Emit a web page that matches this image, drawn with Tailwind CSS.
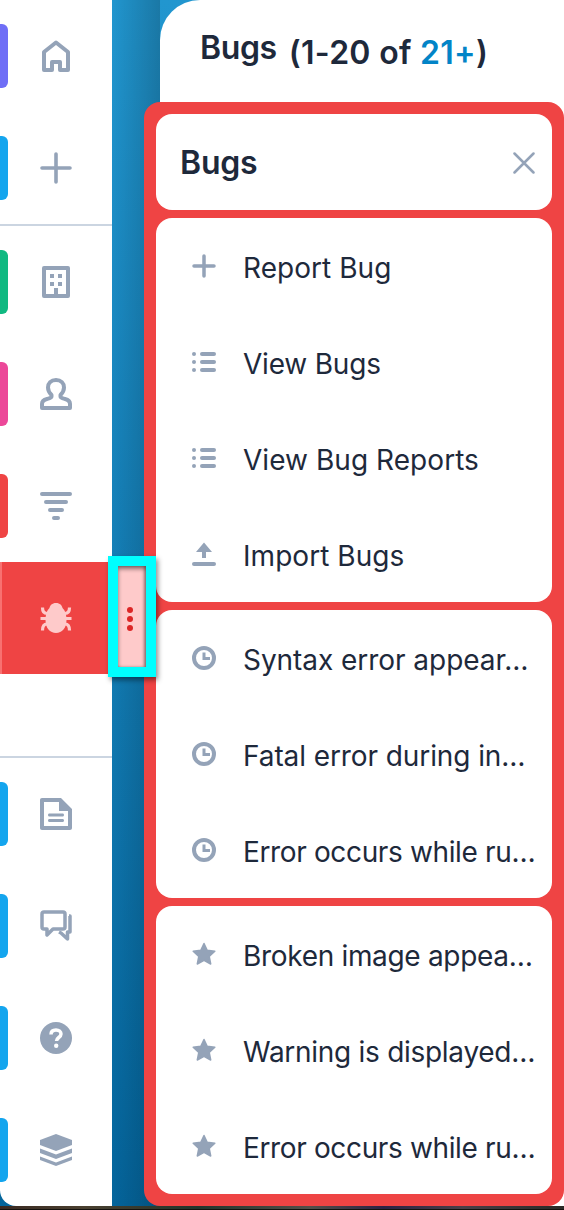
<!DOCTYPE html>
<html lang="en">
  <head>
    <meta charset="UTF-8" />
    <title>Bugs</title>
    <script src="https://cdn.jsdelivr.net/npm/@tailwindcss/browser@4"></script>
  </head>
  <body class="bg-[#15120f] font-['Inter',sans-serif]">
    <div class="relative h-[1210px] w-[564px] overflow-hidden">
      <div class="flex h-[1206px] bg-gradient-to-b from-[#2196cf] to-[#04659c]">
        <!-- Sidebar -->
        <nav class="z-10 flex w-[112px] shrink-0 flex-col rounded-bl-[16px] bg-white">
          <a class="relative flex h-[112px] shrink-0 items-center justify-center">
            <span class="absolute left-0 top-[24px] h-[64px] w-[8px] rounded-r-[6px] bg-[#6f6ef6]"></span>
            <svg class="h-[32px] w-[32px]" viewBox="0 0 32 32" fill="none" stroke="#94a3b8" stroke-width="4" stroke-linejoin="round"><path d="M4 12 16 2.500 28 12V30H20V22H12V30H4Z" /></svg>
          </a>
          <a class="relative flex h-[112px] shrink-0 items-center justify-center">
            <span class="absolute left-0 top-[24px] h-[64px] w-[8px] rounded-r-[6px] bg-[#14a5ee]"></span>
            <svg class="h-[32px] w-[32px]" viewBox="0 0 32 32" fill="none" stroke="#94a3b8" stroke-width="3.600" stroke-linecap="round"><path d="M16 2V30M2 16H30" /></svg>
          </a>
          <div class="h-[2px] shrink-0 bg-[#cbd5e1]"></div>
          <a class="relative flex h-[112px] shrink-0 items-center justify-center">
            <span class="absolute left-0 top-[24px] h-[64px] w-[8px] rounded-r-[6px] bg-[#10b981]"></span>
            <svg class="h-[32px] w-[32px]" viewBox="0 0 32 32" fill="none"><path d="M4 2H28V30H4Z" stroke="#94a3b8" stroke-width="4" stroke-linejoin="round" /><path d="M10 8h4v4h-4zM18 8h4v4h-4zM10 16h4v4h-4zM18 16h4v4h-4zM14 22h4v8h-4z" fill="#94a3b8" /></svg>
          </a>
          <a class="relative flex h-[112px] shrink-0 items-center justify-center">
            <span class="absolute left-0 top-[24px] h-[64px] w-[8px] rounded-r-[6px] bg-[#ec4899]"></span>
            <svg class="h-[32px] w-[32px]" viewBox="0 0 32 32" fill="none" stroke="#94a3b8" stroke-width="4" stroke-linejoin="round"><path d="M16 2C11 2 8 5.500 8 9.500 8 13 10 15.500 11.500 17V18.500C11.500 20 9 20.500 7 21 4 21.800 2 23.500 2 26V30H30V26C30 23.500 28 21.800 25 21 23 20.500 20.500 20 20.500 18.500V17C22 15.500 24 13 24 9.500 24 5.500 21 2 16 2Z" /></svg>
          </a>
          <a class="relative flex h-[112px] shrink-0 items-center justify-center">
            <span class="absolute left-0 top-[24px] h-[64px] w-[8px] rounded-r-[6px] bg-[#ef4444]"></span>
            <svg class="h-[32px] w-[32px]" viewBox="0 0 32 32" fill="none" stroke="#94a3b8" stroke-width="4" stroke-linecap="round"><path d="M2 4H30M6 12H26M10 20H22M14 28H18" /></svg>
          </a>
          <a class="relative flex h-[112px] shrink-0 items-center justify-center border-l-[2px] border-[#f87171] bg-[#ef4444] pr-[2px]">
            <svg class="h-[32px] w-[32px]" viewBox="0 0 32 32" fill="#fecaca"><path d="M16 1C12 1 10 3.500 9.500 6 7 8 5.500 12 5.500 18 5.500 26 10 31 16 31S26.500 26 26.500 18C26.500 12 25 8 22.500 6 22 3.500 20 1 16 1Z" /><path d="M7 11.500C3.500 11.500 2.500 9 2.500 5.500M25 11.500C28.500 11.500 29.500 9 29.500 5.500M6 16.500H.5M26 16.500H31.500M7 22C3.500 22 2.500 24.500 2.500 28.500M25 22C28.500 22 29.500 24.500 29.500 28.500" fill="none" stroke="#fecaca" stroke-width="3.200" /></svg>
          </a>
          <div class="h-[82px] shrink-0"></div>
          <div class="h-[2px] shrink-0 bg-[#cbd5e1]"></div>
          <a class="relative flex h-[112px] shrink-0 items-center justify-center">
            <span class="absolute left-0 top-[24px] h-[64px] w-[8px] rounded-r-[6px] bg-[#14a5ee]"></span>
            <svg class="h-[32px] w-[32px]" viewBox="0 0 32 32" fill="#94a3b8" fill-rule="evenodd"><path d="M2 0H21L32 11V30C32 31.200 31.200 32 30 32H2C.8 32 0 31.200 0 30V2C0 .8.8 0 2 0ZM4 4V28H28V13H19V4ZM9.500 15.500H22.500C23.500 15.500 24 16.200 24 17S23.500 18.500 22.500 18.500H9.500C8.500 18.500 8 17.800 8 17S8.500 15.500 9.500 15.500ZM9.500 21H22.500C23.500 21 24 21.700 24 22.500S23.500 24 22.500 24H9.500C8.500 24 8 23.300 8 22.500S8.500 21 9.500 21Z" /></svg>
          </a>
          <a class="relative flex h-[112px] shrink-0 items-center justify-center">
            <span class="absolute left-0 top-[24px] h-[64px] w-[8px] rounded-r-[6px] bg-[#14a5ee]"></span>
            <svg class="h-[32px] w-[32px]" viewBox="0 0 32 32" fill="none" stroke="#94a3b8" stroke-width="3.500" stroke-linejoin="round"><path d="M4 2H23C24.500 2 25 2.500 25 4V17C25 18.500 24.500 19 23 19H13L7 25V19H4C2.500 19 2 18.500 2 17V4C2 2.500 2.500 2 4 2Z" /><path d="M29 6H30V22H27.500V29L21 23 19 22" /></svg>
          </a>
          <a class="relative flex h-[112px] shrink-0 items-center justify-center">
            <span class="absolute left-0 top-[24px] h-[64px] w-[8px] rounded-r-[6px] bg-[#14a5ee]"></span>
            <svg class="h-[32px] w-[32px]" viewBox="0 0 32 32"><circle cx="16" cy="16" r="16" fill="#94a3b8" /><path d="M11 12.500C11 9.500 13 8 16 8S21 9.700 21 12C21 15.500 16.500 15.500 16.500 19" fill="none" stroke="#fff" stroke-width="3.500" /><circle cx="16.200" cy="23.700" r="2.200" fill="#fff" /></svg>
          </a>
          <a class="relative flex h-[112px] shrink-0 items-center justify-center">
            <span class="absolute left-0 top-[24px] h-[64px] w-[8px] rounded-r-[6px] bg-[#14a5ee]"></span>
            <svg class="h-[32px] w-[32px]" viewBox="0 0 32 32" fill="#94a3b8"><path d="M16 0 32 6V11L16 17 0 11V6Z" /><path d="M0 14.500 16 20.500 32 14.500V19L16 25 0 19Z" /><path d="M0 22.500 16 28.500 32 22.500V26L16 32 0 26Z" /></svg>
          </a>
        </nav>

        <!-- Blue gutter + page behind -->
        <div class="w-[48px] shrink-0 bg-gradient-to-l from-black/20 to-transparent"></div>
        <main class="flex-1 rounded-tl-[40px] bg-white pl-[40px] pt-[28px]">
          <h1 class="flex items-start gap-[12px] text-[32px] font-semibold leading-[40px] text-[#1e293b]">
            <span class="tracking-[-0.4px]">Bugs</span>
            <span class="mt-[5px] tracking-[0.3px]">(1-20 of <span class="text-[#0284c7]">21+</span>)</span>
          </h1>
        </main>
      </div>

      <!-- Strip of the desktop wallpaper under the window -->
      <div class="h-[3px] bg-[linear-gradient(90deg,#3a2a22,#4a4030_15%,#22352c_35%,#55504a_55%,#2c2244_68%,#4a4048_82%,#2a2a26)]"></div>

      <!-- Flyout menu -->
      <div class="absolute left-[144px] top-[102px] z-20 flex h-[1104px] w-[420px] flex-col gap-[8px] rounded-[16px] bg-[#ef4444] p-[12px] text-[#1e293b]">
        <div class="flex h-[96px] shrink-0 items-center justify-between rounded-[16px] bg-white pl-[24px] pr-[17px] pt-[2px]">
          <span class="text-[32px] font-semibold tracking-[-0.2px]">Bugs</span>
          <svg class="h-[22px] w-[22px]" viewBox="0 0 22 22" fill="none" stroke="#94a3b8" stroke-width="2.500" stroke-linecap="round"><path d="M1.500 1.500 20.500 20.500M20.500 1.500 1.500 20.500" /></svg>
        </div>

        <div class="rounded-[16px] bg-white">
          <a class="flex h-[96px] items-center pl-[36px]">
            <svg class="mr-[27px] h-[24px] w-[24px] shrink-0" viewBox="0 0 24 24" fill="none" stroke="#94a3b8" stroke-width="3.500" stroke-linecap="round"><path d="M12 2V22M2 12H22" /></svg>
            <span class="pt-[4px] text-[28px] tracking-[0.05px]">Report Bug</span>
          </a>
          <a class="flex h-[96px] items-center pl-[36px]">
            <svg class="mr-[27px] h-[24px] w-[24px] shrink-0" viewBox="0 0 24 24" fill="#94a3b8"><circle cx="2" cy="4" r="2" /><circle cx="2" cy="12" r="2" /><circle cx="2" cy="20" r="2" /><rect x="8" y="2" width="16" height="4" rx="2" /><rect x="8" y="10" width="16" height="4" rx="2" /><rect x="8" y="18" width="16" height="4" rx="2" /></svg>
            <span class="pt-[4px] text-[28px] tracking-[-0.2px]">View Bugs</span>
          </a>
          <a class="flex h-[96px] items-center pl-[36px]">
            <svg class="mr-[27px] h-[24px] w-[24px] shrink-0" viewBox="0 0 24 24" fill="#94a3b8"><circle cx="2" cy="4" r="2" /><circle cx="2" cy="12" r="2" /><circle cx="2" cy="20" r="2" /><rect x="8" y="2" width="16" height="4" rx="2" /><rect x="8" y="10" width="16" height="4" rx="2" /><rect x="8" y="18" width="16" height="4" rx="2" /></svg>
            <span class="pt-[4px] text-[28px] tracking-[0.05px]">View Bug Reports</span>
          </a>
          <a class="flex h-[96px] items-center pl-[36px]">
            <svg class="mr-[27px] h-[24px] w-[24px] shrink-0" viewBox="0 0 24 24" fill="#94a3b8"><path d="M12 .5 20 10H14V16H10V10H4Z" /><rect x="0" y="20" width="24" height="4" rx="2" /></svg>
            <span class="pt-[4px] text-[28px] tracking-[0.05px]">Import Bugs</span>
          </a>
        </div>

        <div class="rounded-[16px] bg-white">
          <a class="flex h-[96px] items-center pl-[36px]">
            <svg class="mr-[27px] h-[24px] w-[24px] shrink-0" viewBox="0 0 24 24" fill="none" stroke="#94a3b8"><circle cx="12" cy="12" r="10" stroke-width="4" /><path d="M12 6.500V12.500H18" stroke-width="3" /></svg>
            <span class="pt-[4px] text-[28px] tracking-[-0.05px]">Syntax error appear…</span>
          </a>
          <a class="flex h-[96px] items-center pl-[36px]">
            <svg class="mr-[27px] h-[24px] w-[24px] shrink-0" viewBox="0 0 24 24" fill="none" stroke="#94a3b8"><circle cx="12" cy="12" r="10" stroke-width="4" /><path d="M12 6.500V12.500H18" stroke-width="3" /></svg>
            <span class="pt-[4px] text-[28px] tracking-[-0.09px]">Fatal error during in…</span>
          </a>
          <a class="flex h-[96px] items-center pl-[36px]">
            <svg class="mr-[27px] h-[24px] w-[24px] shrink-0" viewBox="0 0 24 24" fill="none" stroke="#94a3b8"><circle cx="12" cy="12" r="10" stroke-width="4" /><path d="M12 6.500V12.500H18" stroke-width="3" /></svg>
            <span class="pt-[4px] text-[28px] tracking-[-0.36px]">Error occurs while ru…</span>
          </a>
        </div>

        <div class="rounded-[16px] bg-white">
          <a class="flex h-[96px] items-center pl-[36px]">
            <svg class="mr-[27px] h-[24px] w-[24px] shrink-0" viewBox="0 0 24 24" fill="#94a3b8" stroke="#94a3b8" stroke-width="1.500" stroke-linejoin="round"><path d="M12 1.500 15.200 8.300 22.800 9.300 17.200 14.500 18.700 22 12 18.300 5.300 22 6.800 14.500 1.200 9.300 8.800 8.300Z" /></svg>
            <span class="pt-[4px] text-[28px] tracking-[-0.32px]">Broken image appea…</span>
          </a>
          <a class="flex h-[96px] items-center pl-[36px]">
            <svg class="mr-[27px] h-[24px] w-[24px] shrink-0" viewBox="0 0 24 24" fill="#94a3b8" stroke="#94a3b8" stroke-width="1.500" stroke-linejoin="round"><path d="M12 1.500 15.200 8.300 22.800 9.300 17.200 14.500 18.700 22 12 18.300 5.300 22 6.800 14.500 1.200 9.300 8.800 8.300Z" /></svg>
            <span class="pt-[4px] text-[28px] tracking-[-0.28px]">Warning is displayed…</span>
          </a>
          <a class="flex h-[96px] items-center pl-[36px]">
            <svg class="mr-[27px] h-[24px] w-[24px] shrink-0" viewBox="0 0 24 24" fill="#94a3b8" stroke="#94a3b8" stroke-width="1.500" stroke-linejoin="round"><path d="M12 1.500 15.200 8.300 22.800 9.300 17.200 14.500 18.700 22 12 18.300 5.300 22 6.800 14.500 1.200 9.300 8.800 8.300Z" /></svg>
            <span class="pt-[4px] text-[28px] tracking-[-0.36px]">Error occurs while ru…</span>
          </a>
        </div>
      </div>

      <!-- Highlighted handle -->
      <div class="absolute left-[108px] top-[556px] z-30 flex h-[121px] w-[48px] items-center justify-center border-[10px] border-[#00ffff] bg-[#fecaca] pr-[4px] pt-[5px] shadow-[2px_3px_5px_rgba(0,0,0,0.45),inset_0_3px_4px_rgba(0,0,0,0.45),inset_-2px_0_3px_rgba(0,0,0,0.3)]">
        <div class="flex flex-col gap-[3px]">
          <span class="h-[6px] w-[6px] rounded-full bg-[#dc2626]"></span>
          <span class="h-[6px] w-[6px] rounded-full bg-[#dc2626]"></span>
          <span class="h-[6px] w-[6px] rounded-full bg-[#dc2626]"></span>
        </div>
      </div>
    </div>
  </body>
</html>
